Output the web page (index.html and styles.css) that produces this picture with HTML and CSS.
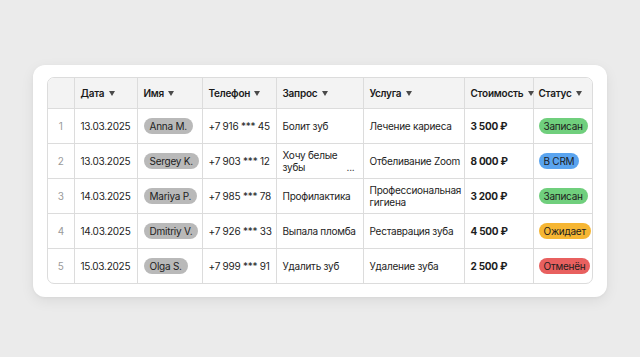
FILE: index.html
```html
<!DOCTYPE html>
<html lang="ru">
<head>
<meta charset="utf-8">
<link rel="stylesheet" href="styles.css">
</head>
<body>
<div class="card">
  <div class="table-wrap">
    <table class="grid">
      <colgroup>
        <col class="c-idx"><col class="c-date"><col class="c-name"><col class="c-tel"><col class="c-req"><col class="c-svc"><col class="c-cost"><col class="c-stat">
      </colgroup>
      <thead>
        <tr>
          <th></th>
          <th>Дата <span class="arr"></span></th>
          <th>Имя <span class="arr"></span></th>
          <th>Телефон <span class="arr"></span></th>
          <th>Запрос <span class="arr"></span></th>
          <th>Услуга <span class="arr"></span></th>
          <th>Стоимость <span class="arr"></span></th>
          <th class="stat">Статус <span class="arr"></span></th>
        </tr>
      </thead>
      <tbody>
        <tr>
          <td class="idx">1</td><td>13.03.2025</td><td><span class="name">Anna M.</span></td><td>+7 916 *** 45</td><td>Болит зуб</td><td>Лечение кариеса</td><td class="cost">3 500 ₽</td><td class="stat"><span class="st green">Записан</span></td>
        </tr>
        <tr>
          <td class="idx">2</td><td>13.03.2025</td><td><span class="name">Sergey K.</span></td><td>+7 903 *** 12</td><td><div class="req"><span>Хочу белые<br>зубы</span><span class="dots">...</span></div></td><td>Отбеливание Zoom</td><td class="cost">8 000 ₽</td><td class="stat"><span class="st blue">В CRM</span></td>
        </tr>
        <tr>
          <td class="idx">3</td><td>14.03.2025</td><td><span class="name">Mariya P.</span></td><td>+7 985 *** 78</td><td>Профилактика</td><td class="two">Профессиональная гигиена</td><td class="cost">3 200 ₽</td><td class="stat"><span class="st green">Записан</span></td>
        </tr>
        <tr>
          <td class="idx">4</td><td>14.03.2025</td><td><span class="name">Dmitriy V.</span></td><td>+7 926 *** 33</td><td>Выпала пломба</td><td>Реставрация зуба</td><td class="cost">4 500 ₽</td><td class="stat"><span class="st yellow">Ожидает</span></td>
        </tr>
        <tr>
          <td class="idx">5</td><td>15.03.2025</td><td><span class="name">Olga S.</span></td><td>+7 999 *** 91</td><td>Удалить зуб</td><td>Удаление зуба</td><td class="cost">2 500 ₽</td><td class="stat"><span class="st red">Отменён</span></td>
        </tr>
      </tbody>
    </table>
  </div>
</div>
</body>
</html>
```
FILE: styles.css
```css
* { box-sizing: border-box; }
html, body { margin: 0; padding: 0; }
body {
  width: 640px;
  height: 357px;
  background: #ebebeb;
  font-family: Inter, "Noto Sans", sans-serif;
  color: #1d1d1d;
  padding: 65px 33px 0;
}
.card {
  width: 574px;
  height: 232px;
  background: #fff;
  border-radius: 12px;
  padding: 12px 14px 14px;
  box-shadow: 0 4px 14px rgba(0,0,0,0.07), 0 1px 3px rgba(0,0,0,0.04);
}
.table-wrap {
  width: 546px;
  border: 1px solid #dcdcdc;
  border-radius: 7px;
  overflow: hidden;
}
.grid {
  width: 544px;
  table-layout: fixed;
  border-collapse: collapse;
  font-size: 10px;
  letter-spacing: -0.25px;
  line-height: 12px;
}
.c-idx { width: 26px; }
.c-date { width: 63px; }
.c-name { width: 65px; }
.c-tel { width: 74px; }
.c-req { width: 87px; }
.c-svc { width: 101px; }
.c-cost { width: 69px; }
.c-stat { width: 59px; }
.grid th, .grid td {
  border: 1px solid #dcdcdc;
  padding: 0 6px;
  text-align: left;
  vertical-align: middle;
  white-space: nowrap;
}
.grid tr > :first-child { border-left: none; }
.grid tr > :last-child { border-right: none; }
.grid thead th { border-top: none; }
.grid tbody tr:last-child td { border-bottom: none; }
.grid th {
  height: 30px;
  background: #f3f3f3;
  font-weight: 600;
  color: #1a1a1a;
}
.grid td { height: 35px; }
.grid .stat { padding: 0 0 0 5px; overflow: visible; }
.arr {
  display: inline-block;
  width: 0; height: 0;
  border-left: 3.5px solid transparent;
  border-right: 3.5px solid transparent;
  border-top: 5px solid #4a4a4a;
  margin-left: 2px;
  vertical-align: 1px;
}
.grid td.idx { text-align: center; color: #9a9a9a; padding: 0; }
.grid td.two { white-space: normal; line-height: 12px; }
.cost { font-weight: 700; }
.name {
  display: inline-block;
  background: #b9b9b9;
  border-radius: 8px;
  padding: 0 6px;
  height: 16px;
  line-height: 16px;
}
.req {
  display: flex;
  justify-content: space-between;
  align-items: flex-end;
  padding-top: 1px;
}
.dots { padding-right: 2px; }
.st {
  display: inline-block;
  border-radius: 8px;
  padding: 0 5px;
  height: 16px;
  line-height: 16px;
}
.green { background: #70cf7d; }
.blue { background: #5aa4ef; }
.yellow { background: #f6b633; }
.red { background: #e8605f; }
```
